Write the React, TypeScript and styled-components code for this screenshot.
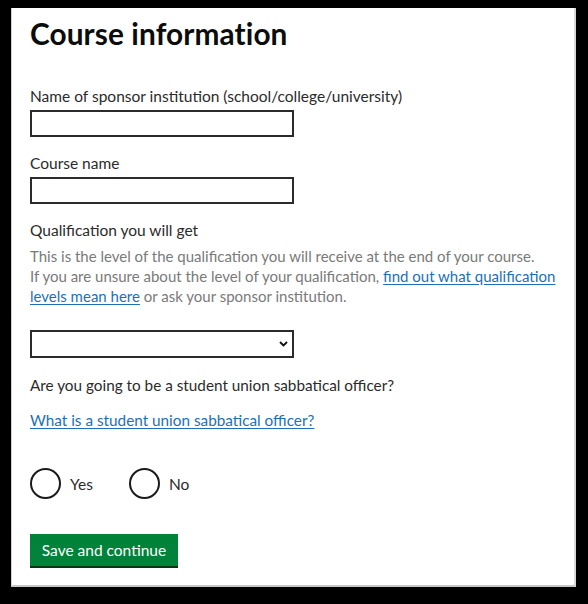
import React from "react";
import styled, { createGlobalStyle } from "styled-components";

const Global = createGlobalStyle`
  html, body { margin: 0; padding: 0; background: #000; }
  body { font-family: Lato, "Open Sans", Arial, sans-serif; }
`;

const Frame = styled.div`
  width: 588px;
  height: 604px;
  background: #000;
  padding: 8px 0 0 11px;
  box-sizing: border-box;
`;

const Panel = styled.main`
  width: 565px;
  height: 579px;
  background: #fff;
  box-sizing: border-box;
  padding: 9px 0 0 18px;
  color: #0b0c0c;
  border-left: 1px solid #d0d0d0;
  border-bottom: 2px solid #c8c8c8;
  border-right: 2px solid #d8d8d8;
`;

const Title = styled.h1`
  margin: 0 0 35px 0;
  font-size: 29.8px;
  line-height: 34px;
  font-weight: 700;
  letter-spacing: 0.1px;
`;

const Field = styled.div<{ $gap?: number }>`
  display: flex;
  flex-direction: column;
  margin-bottom: ${(p) => p.$gap ?? 16}px;
`;

const Label = styled.label`
  font-size: 15.5px;
  line-height: 20px;
  color: #2b2b2b;
  margin-bottom: 4px;
`;

const Hint = styled.p`
  margin: 2px 0 24px 0;
  font-size: 15px;
  line-height: 20px;
  color: #7a7a7a;
  width: 540px;
`;

const Link = styled.a`
  color: #1d70b8;
  text-decoration: underline;
  text-underline-offset: 2px;
`;

const TextInput = styled.input`
  width: 264px;
  height: 27px;
  box-sizing: border-box;
  border: 2px solid #2b2b2b;
  background: #fff;
  margin: 0;
  padding: 2px 4px;
`;

const SelectBox = styled.div`
  position: relative;
  width: 264px;
  height: 28px;
  box-sizing: border-box;
  border: 2px solid #2b2b2b;
  background: #fff;
`;

const Chevron = styled.svg`
  position: absolute;
  right: 4px;
  top: 9px;
`;

const Question = styled.p`
  margin: 0 0 15px 0;
  font-size: 15.3px;
  line-height: 20px;
  color: #2b2b2b;
`;

const QuestionLink = styled(Link)`
  display: block;
  font-size: 15.3px;
  line-height: 20px;
  margin-bottom: 38px;
`;

const Radios = styled.div`
  display: flex;
  gap: 36px;
  align-items: center;
  margin-bottom: 35px;
`;

const RadioItem = styled.label`
  display: flex;
  align-items: center;
  gap: 9px;
  font-size: 15.5px;
  color: #2b2b2b;
`;

const Circle = styled.span`
  width: 31px;
  height: 31px;
  box-sizing: border-box;
  border: 2px solid #1a1a1a;
  border-radius: 50%;
  background: #fff;
`;

const Button = styled.button`
  width: 148px;
  height: 32px;
  background: #00823b;
  color: #fff;
  border: none;
  box-shadow: 0 2px 0 #003618;
  font-family: Lato, "Open Sans", Arial, sans-serif;
  font-size: 15.5px;
  padding: 0;
  margin: 0;
`;

export default function App() {
  return (
    <Frame>
      <Global />
      <Panel>
        <Title>Course information</Title>
        <Field>
          <Label>Name of sponsor institution (school/college/university)</Label>
          <TextInput type="text" />
        </Field>
        <Field>
          <Label>Course name</Label>
          <TextInput type="text" />
        </Field>
        <Field $gap={17}>
          <Label>Qualification you will get</Label>
          <Hint>
            This is the level of the qualification you will receive at the end of your course.
            <br />
            If you are unsure about the level of your qualification,{" "}
            <Link href="#">find out what qualification levels mean here</Link> or ask your
            sponsor institution.
          </Hint>
          <SelectBox>
            <Chevron width="9" height="6" viewBox="0 0 9 6">
              <path d="M1 1 L4.5 4.5 L8 1" fill="none" stroke="#111" strokeWidth="1.8" />
            </Chevron>
          </SelectBox>
        </Field>
        <Question>Are you going to be a student union sabbatical officer?</Question>
        <QuestionLink href="#">What is a student union sabbatical officer?</QuestionLink>
        <Radios>
          <RadioItem>
            <Circle />
            Yes
          </RadioItem>
          <RadioItem>
            <Circle />
            No
          </RadioItem>
        </Radios>
        <Button>Save and continue</Button>
      </Panel>
    </Frame>
  );
}
